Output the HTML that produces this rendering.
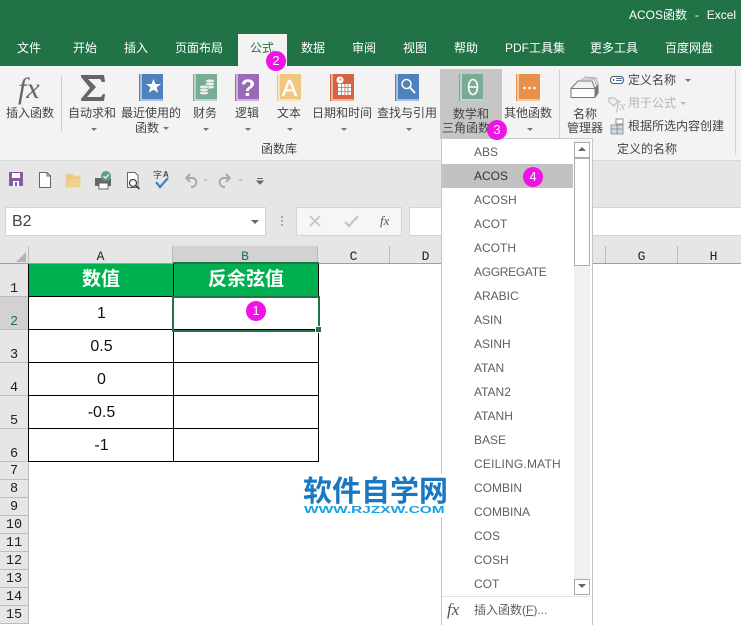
<!DOCTYPE html>
<html><head><meta charset="utf-8">
<style>
html,body{margin:0;padding:0}
#r{position:relative;width:741px;height:625px;overflow:hidden;background:#fff;font-family:"Liberation Sans","Noto Sans CJK SC",sans-serif;font-size:12px;color:#444}
#r div{position:absolute}
.t{white-space:nowrap;line-height:16px;height:16px;transform:translateX(-50%)}
.l{white-space:nowrap;line-height:16px;height:16px}
.tab{color:#fff;top:40px}
.arr{width:0;height:0;border-left:3px solid transparent;border-right:3px solid transparent;border-top:3px solid #777}
.badge{width:20px;height:20px;border-radius:50%;background:#f012e6;color:#fff;text-align:center;line-height:20px;font-size:13px;z-index:9}
.ch{top:246px;height:17px;border-right:1px solid #bbb;background:#e6e6e6;text-align:center;font:13px/21px "Liberation Mono",monospace;color:#222}
.rh{left:0;width:28px;background:#e6e6e6;border-bottom:1px solid #bdbdbd;border-right:1px solid #bbb;text-align:center;font:13.5px/20px "Liberation Mono",monospace;color:#222}
.rh div{line-height:15px}
.c{background:#000}
.d{width:145px;text-align:center;font-size:16px;line-height:20px;color:#111;height:20px}
.m{left:474px;font-size:12px;line-height:16px;height:16px;color:#5f5f5f;z-index:6;white-space:nowrap}
svg{position:absolute;overflow:visible}
</style></head><body><div id="r">
<div style="left:0;top:0;width:741px;height:66px;background:#217346"></div>
<div class="l" style="left:629px;top:7px;color:#fff;word-spacing:.6px">ACOS函数&nbsp; -&nbsp; Excel</div>
<div style="left:238px;top:34px;width:49px;height:32px;background:#f3f3f3"></div>
<div class="l tab" style="left:17px">文件</div>
<div class="l tab" style="left:73px">开始</div>
<div class="l tab" style="left:124px">插入</div>
<div class="l tab" style="left:175px">页面布局</div>
<div class="l tab" style="left:250px;color:#217346">公式</div>
<div class="l tab" style="left:301px">数据</div>
<div class="l tab" style="left:352px">审阅</div>
<div class="l tab" style="left:403px">视图</div>
<div class="l tab" style="left:454px">帮助</div>
<div class="l tab" style="left:505px">PDF工具集</div>
<div class="l tab" style="left:590px">更多工具</div>
<div class="l tab" style="left:665px">百度网盘</div>

<div style="left:0;top:66px;width:741px;height:94px;background:#f3f3f3;border-bottom:1px solid #d8d8d8"></div>
<div style="left:440px;top:69px;width:62px;height:70px;background:#c6c6c6"></div>
<div style="left:61px;top:76px;width:1px;height:55px;background:#ccc"></div>
<div style="left:559px;top:70px;width:1px;height:85px;background:#d4d4d4"></div>
<div style="left:735px;top:70px;width:1px;height:85px;background:#d4d4d4"></div>

<div class="l" style="left:18px;top:74px;font:italic 30px/30px 'Liberation Serif',serif;height:30px;color:#666">fx</div>
<div style="left:0;top:0;width:0;height:0"><svg width="741" height="160" style="left:0;top:0">
<path d="M81 75H104L105 82H102L100 79H88L96 87L87 97H101L103 94H105L104 101H81V99L90 88L81 77Z" fill="#666"/>
<g><rect x="139" y="74" width="24" height="27" fill="#4f81bd"/><path d="M141 74V100H163" fill="none" stroke="#fff" stroke-width="1"/><path d="M153.500 79l2 5h5.500l-4.400 3.400 1.700 5.500-4.800-3.200-4.800 3.200 1.700-5.500-4.400-3.400h5.500z" fill="#fff"/></g>
<g><rect x="193" y="74" width="24" height="27" fill="#7aab96"/><path d="M195 74V100H217" fill="none" stroke="#fff"/><g fill="#e8efe9" stroke="#7aab96" stroke-width=".5"><ellipse cx="210" cy="87" rx="4.500" ry="1.800"/><ellipse cx="210" cy="84" rx="4.500" ry="1.800"/><ellipse cx="210" cy="81" rx="4.500" ry="1.800"/><ellipse cx="204" cy="93" rx="4.500" ry="1.800"/><ellipse cx="204" cy="90" rx="4.500" ry="1.800"/><ellipse cx="204" cy="87" rx="4.500" ry="1.800"/></g></g>
<g><rect x="235" y="74" width="24" height="27" fill="#9a6ab8"/><path d="M237 74V100H259" fill="none" stroke="#fff"/></g>
<g><rect x="277" y="74" width="24" height="27" fill="#efc77f"/><path d="M279 74V100H301" fill="none" stroke="#fff"/></g>
<g><rect x="330" y="74" width="24" height="27" fill="#d56344"/><path d="M332 74V100H354" fill="none" stroke="#fff"/><rect x="338" y="84" width="13" height="11" fill="#fff"/><path d="M338 87.500H351M338 91.500H351M341.500 84V95M345 84V95M348 84V95" stroke="#d56344" stroke-width=".8"/><circle cx="340" cy="80" r="3.500" fill="#fff"/><path d="M340 78v2h2" stroke="#d56344" fill="none" stroke-width=".8"/></g>
<g><rect x="395" y="74" width="24" height="27" fill="#4f81bd"/><path d="M397 74V100H419" fill="none" stroke="#fff"/><circle cx="406.500" cy="84" r="4.500" fill="none" stroke="#fff" stroke-width="1.500"/><path d="M410 87.500L415 93" stroke="#fff" stroke-width="2"/></g>
<g><rect x="459" y="74" width="24" height="27" fill="#7aab96"/><path d="M461 74V100H483" fill="none" stroke="#fff"/><ellipse cx="473" cy="87" rx="4.500" ry="7.500" fill="none" stroke="#fff" stroke-width="1.500"/><path d="M468.500 87H477.500" stroke="#fff" stroke-width="1.500"/></g>
<g><rect x="516" y="74" width="24" height="27" fill="#e8914a"/><path d="M518 74V100H540" fill="none" stroke="#fff"/><g fill="#fff"><circle cx="524.500" cy="88" r="1.300"/><circle cx="529.500" cy="88" r="1.300"/><circle cx="534.500" cy="88" r="1.300"/></g></g>
<text x="248" y="96" font-family="Liberation Sans" font-weight="bold" font-size="24" fill="#fff" text-anchor="middle">?</text>
<text x="289.500" y="96" font-family="Liberation Sans" font-size="23" fill="#fff" stroke="#fff" stroke-width=".4" text-anchor="middle">A</text>
<g fill="none" stroke="#777" stroke-width="1"><path d="M571 88.500H595V97.500H571Z" fill="#fff"/><path d="M571 88.500L578 81H592L595 88.500"/><path d="M581 79L594 79 597 86" stroke="#aaa"/><path d="M584 77L596 78 598 84" stroke="#aaa"/><path d="M595 88.500L598 85V93L595 97.500" fill="#777"/></g>
<g fill="none" stroke="#555"><rect x="610.500" y="76.500" width="13" height="7" rx="3" fill="#fff"/></g><circle cx="613.500" cy="80" r="1" fill="#666"/><path d="M616 78.500h6M616 80.500h6" stroke="#3a77b0"/>
<g fill="none" stroke="#c0c0c0" stroke-width="1.200"><path d="M609 98l5 0 4 3-4 5-5-4z"/></g>
<text x="616" y="110" font-family="Liberation Serif" font-style="italic" font-size="13" fill="#bbb">fx</text>
<g><rect x="611" y="125" width="12" height="9" fill="#cfd9e6" stroke="#888" stroke-width=".8"/><path d="M611 129H623M617 125V134" stroke="#888" stroke-width=".8"/><rect x="616" y="119" width="7" height="5" fill="#fff" stroke="#777" stroke-width=".8"/></g>
</svg></div>

<div class="t" style="left:30px;top:105px">插入函数</div>
<div class="t" style="left:92px;top:105px">自动求和</div>
<div class="t" style="left:151px;top:105px">最近使用的</div>
<div class="t" style="left:147px;top:120px">函数</div>
<div class="t" style="left:205px;top:105px">财务</div>
<div class="t" style="left:247px;top:105px">逻辑</div>
<div class="t" style="left:289px;top:105px">文本</div>
<div class="t" style="left:342px;top:105px">日期和时间</div>
<div class="t" style="left:407px;top:105px">查找与引用</div>
<div class="t" style="left:471px;top:106px">数学和</div>
<div class="t" style="left:466px;top:120px">三角函数</div>
<div class="t" style="left:528px;top:105px">其他函数</div>
<div class="t" style="left:585px;top:106px">名称</div>
<div class="t" style="left:585px;top:120px">管理器</div>
<div class="l" style="left:628px;top:72px">定义名称</div>
<div class="l" style="left:628px;top:95px;color:#b5b5b5">用于公式</div>
<div class="l" style="left:628px;top:118px">根据所选内容创建</div>
<div class="l" style="left:617px;top:141px">定义的名称</div>
<div class="l" style="left:261px;top:141px">函数库</div>
<div class="arr" style="left:91px;top:128px"></div>
<div class="arr" style="left:163px;top:127px"></div>
<div class="arr" style="left:203px;top:128px"></div>
<div class="arr" style="left:245px;top:128px"></div>
<div class="arr" style="left:287px;top:128px"></div>
<div class="arr" style="left:341px;top:128px"></div>
<div class="arr" style="left:406px;top:128px"></div>
<div class="arr" style="left:527px;top:128px"></div>
<div class="arr" style="left:685px;top:79px"></div>
<div class="arr" style="left:680px;top:102px;border-top-color:#bbb"></div>

<div style="left:0;top:161px;width:741px;height:85px;background:#e6e6e6"></div>
<div style="left:0;top:161px;width:0;height:0"><svg width="300" height="40" style="left:0;top:0">
<path d="M9 11H23V25H9Z" fill="#8a5aa8"/><rect x="12" y="12" width="8" height="5" fill="#fff"/><rect x="13" y="20" width="6" height="5" fill="#fff"/><rect x="15" y="21" width="2" height="4" fill="#8a5aa8"/>
<path d="M39.500 11.500H47L50.500 15V26.500H39.500Z" fill="#fff" stroke="#666"/><path d="M47 11.500V15H50.500" fill="none" stroke="#666"/>
<path d="M66 13H72L74 15H80V26H66Z" fill="#efc77f" stroke="#e8d3a8"/><path d="M66 26L69 18H81L79 26Z" fill="#f3d08e"/>
<rect x="95" y="17" width="16" height="8" fill="#666"/><rect x="99" y="22" width="9" height="6" fill="#fff" stroke="#666"/><circle cx="106" cy="15" r="5" fill="#5f9e8a"/><path d="M103.500 15l2 2 3.500-3.500" stroke="#fff" fill="none" stroke-width="1.200"/>
<path d="M127.500 11.500H135L138 14.500V26.500H127.500Z" fill="#fff" stroke="#666"/><circle cx="133" cy="22" r="3.500" fill="#fff" stroke="#444" stroke-width="1.300"/><path d="M135.500 24.500L139.500 28" stroke="#444" stroke-width="1.600"/>
<path d="M156 21L160 26L168 17" fill="none" stroke="#3f7fbf" stroke-width="2.200"/>
<text x="153" y="17" font-size="9" font-family="Noto Sans CJK SC" fill="#444">字</text><text x="163" y="16" font-size="8" font-weight="bold" font-family="Liberation Sans" fill="#444">A</text>
<path d="M186 17H192C198 17 198 26 191 26M186 17L190 13M186 17L190 21" fill="none" stroke="#aaa" stroke-width="2"/>
<path d="M230 17H224C218 17 218 26 225 26M230 17L226 13M230 17L226 21" fill="none" stroke="#aaa" stroke-width="2"/>
<path d="M203 18l2.500 2.500 2.500-2.500zM238 18l2.500 2.500 2.500-2.500z" fill="#c0c0c0"/>
<path d="M257 17.500h6M257 20l3 3 3-3z" stroke="#666" fill="#666" stroke-width="1"/>
</svg></div>

<div style="left:5px;top:207px;width:259px;height:27px;background:#fff;border:1px solid #d4d4d4"></div>
<div class="l" style="left:12px;top:214px;font-size:16px;color:#444">B2</div>
<div class="arr" style="left:251px;top:220px;border-left-width:4px;border-right-width:4px;border-top-width:4px;border-top-color:#666"></div>
<div style="left:281px;top:216px;width:2px;height:2px;background:#aaa;box-shadow:0 4px 0 #aaa,0 8px 0 #aaa"></div>
<div style="left:296px;top:207px;width:104px;height:27px;background:#f6f6f6;border:1px solid #d4d4d4;box-sizing:content-box"></div>
<div class="l" style="left:409px;top:207px;width:340px;height:27px;background:#fff;border:1px solid #d4d4d4"></div>
<div style="left:0;top:161px;width:0;height:0"><svg width="400" height="80" style="left:0;top:0">
<path d="M310 55L320 65M320 55L310 65" stroke="#c4c4c4" stroke-width="1.800"/>
<path d="M345 61L349 65L358 55" fill="none" stroke="#c4c4c4" stroke-width="2.200"/>
<text x="380" y="64" font-family="Liberation Serif" font-style="italic" font-size="13" fill="#555">fx</text>
</svg></div>

<div style="left:0;top:246px;width:28px;height:17px;background:#e6e6e6;border-right:1px solid #bbb"></div>
<svg width="12" height="12" style="left:15px;top:251px"><path d="M11 1V11H1Z" fill="#b5b5b5"/></svg>
<div class="ch" style="left:29px;width:143px">A</div>
<div class="ch" style="left:173px;width:144px;background:#d2d2d2;color:#217346">B</div>
<div class="ch" style="left:318px;width:71px">C</div>
<div class="ch" style="left:390px;width:71px">D</div>
<div class="ch" style="left:462px;width:71px">E</div>
<div class="ch" style="left:534px;width:71px">F</div>
<div class="ch" style="left:606px;width:71px">G</div>
<div class="ch" style="left:678px;width:71px">H</div>
<div style="left:0;top:263px;width:741px;height:1px;background:#9f9f9f"></div>
<div style="left:173px;top:262px;width:146px;height:2px;background:#217346"></div>

<div class="rh" style="top:264px;height:32px"><div style="left:0;right:0;bottom:-1px">1</div></div>
<div class="rh" style="top:297px;height:32px;background:#d2d2d2;color:#217346"><div style="left:0;right:0;bottom:-1px">2</div></div>
<div class="rh" style="top:330px;height:32px"><div style="left:0;right:0;bottom:-1px">3</div></div>
<div class="rh" style="top:363px;height:32px"><div style="left:0;right:0;bottom:-1px">4</div></div>
<div class="rh" style="top:396px;height:32px"><div style="left:0;right:0;bottom:-1px">5</div></div>
<div class="rh" style="top:429px;height:32px"><div style="left:0;right:0;bottom:-1px">6</div></div>
<div class="rh" style="top:462px;height:17px">7</div>
<div class="rh" style="top:480px;height:17px">8</div>
<div class="rh" style="top:498px;height:17px">9</div>
<div class="rh" style="top:516px;height:17px">10</div>
<div class="rh" style="top:534px;height:17px">11</div>
<div class="rh" style="top:552px;height:17px">12</div>
<div class="rh" style="top:570px;height:17px">13</div>
<div class="rh" style="top:588px;height:17px">14</div>
<div class="rh" style="top:606px;height:17px">15</div>

<div style="left:29px;top:264px;width:289px;height:33px;background:#00b050"></div>
<div class="c" style="left:28px;top:296px;width:291px;height:1px"></div>
<div class="c" style="left:28px;top:329px;width:291px;height:1px"></div>
<div class="c" style="left:28px;top:362px;width:291px;height:1px"></div>
<div class="c" style="left:28px;top:395px;width:291px;height:1px"></div>
<div class="c" style="left:28px;top:428px;width:291px;height:1px"></div>
<div class="c" style="left:28px;top:461px;width:291px;height:1px"></div>
<div class="c" style="left:28px;top:264px;width:1px;height:198px"></div>
<div class="c" style="left:173px;top:264px;width:1px;height:198px"></div>
<div class="c" style="left:318px;top:264px;width:1px;height:198px"></div>
<div style="left:29px;top:268px;width:144px;text-align:center;color:#fff;font-weight:bold;font-size:19px;line-height:24px">数值</div>
<div style="left:174px;top:268px;width:144px;text-align:center;color:#fff;font-weight:bold;font-size:19px;line-height:24px">反余弦值</div>
<div class="d" style="left:29px;top:304px">1</div>
<div class="d" style="left:29px;top:337px">0.5</div>
<div class="d" style="left:29px;top:370px">0</div>
<div class="d" style="left:29px;top:403px">-0.5</div>
<div class="d" style="left:29px;top:436px">-1</div>
<div style="left:172px;top:296px;width:144px;height:32px;border:2px solid #217346"></div>
<div style="left:315px;top:326px;width:5px;height:5px;background:#217346;border:1px solid #fff"></div>

<div style="left:441px;top:138px;width:150px;height:486px;background:#fff;border:1px solid #c6c6c6;z-index:5"></div>
<div style="left:442px;top:164px;width:131px;height:24px;background:#c2c2c2;z-index:6"></div>
<div style="left:574px;top:140px;width:16px;height:455px;background:#f0f0f0;z-index:6"></div>
<div style="left:574px;top:142px;width:14px;height:14px;background:#fff;border:1px solid #ababab;z-index:7"></div>
<div style="left:578px;top:147px;width:0;height:0;border-left:4px solid transparent;border-right:4px solid transparent;border-bottom:4px solid #666;z-index:8"></div>
<div style="left:574px;top:158px;width:14px;height:106px;background:#fff;border:1px solid #ababab;z-index:7"></div>
<div style="left:574px;top:579px;width:14px;height:14px;background:#fff;border:1px solid #ababab;z-index:7"></div>
<div style="left:578px;top:584px;width:0;height:0;border-left:4px solid transparent;border-right:4px solid transparent;border-top:4px solid #666;z-index:8"></div>
<div style="left:442px;top:596px;width:148px;height:1px;background:#e2e2e2;z-index:6"></div>

<div class="m" style="top:144px">ABS</div>
<div class="m" style="top:168px;color:#333">ACOS</div>
<div class="m" style="top:192px">ACOSH</div>
<div class="m" style="top:216px">ACOT</div>
<div class="m" style="top:240px">ACOTH</div>
<div class="m" style="top:264px;letter-spacing:-.3px">AGGREGATE</div>
<div class="m" style="top:288px">ARABIC</div>
<div class="m" style="top:312px">ASIN</div>
<div class="m" style="top:336px">ASINH</div>
<div class="m" style="top:360px">ATAN</div>
<div class="m" style="top:384px">ATAN2</div>
<div class="m" style="top:408px">ATANH</div>
<div class="m" style="top:432px">BASE</div>
<div class="m" style="top:456px;letter-spacing:.2px">CEILING.MATH</div>
<div class="m" style="top:480px">COMBIN</div>
<div class="m" style="top:504px">COMBINA</div>
<div class="m" style="top:528px">COS</div>
<div class="m" style="top:552px">COSH</div>
<div class="m" style="top:576px">COT</div>
<div class="m" style="top:602px">插入函数(<u>F</u>)...</div>
<div style="left:447px;top:600px;font:italic 17px/20px 'Liberation Serif',serif;color:#555;z-index:6">fx</div>

<div style="left:300px;top:474px;width:150px;height:43px;background:#fff;z-index:10"></div>
<div style="left:303px;top:472px;font-size:29px;line-height:34px;font-weight:bold;color:#1a78c2;white-space:nowrap;font-family:'Noto Sans CJK SC',sans-serif;z-index:11">软件自学网</div>
<div style="left:304px;top:503px;font-size:10.500px;line-height:14px;font-weight:bold;color:#18a0e0;white-space:nowrap;transform:scaleX(1.47);transform-origin:0 0;z-index:11">WWW.RJZXW.COM</div>

<div class="badge" style="left:266px;top:51px">2</div>
<div class="badge" style="left:487px;top:120px">3</div>
<div class="badge" style="left:246px;top:301px">1</div>
<div class="badge" style="left:523px;top:167px">4</div>
</div></body></html>
